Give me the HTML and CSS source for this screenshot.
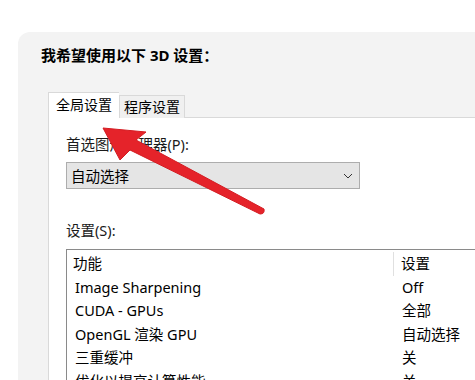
FILE: index.html
```html
<!DOCTYPE html>
<html lang="zh-CN">
<head>
    <meta charset="UTF-8">
    <title>3D 设置</title>
    <link rel="stylesheet" href="styles.css">
</head>
<body>
    <div class="panel">
        <div class="title">我希望使用以下 3D 设置：</div>
        <div class="tabs">
            <div class="tab active">全局设置</div>
            <div class="tab">程序设置</div>
        </div>
        <div class="pane">
            <div class="label">首选图形处理器(P):</div>
            <div class="select">
                <span>自动选择</span>
                <svg class="chevron" width="10" height="6" viewBox="0 0 10 6">
                    <path d="M1 1 L5 5 L9 1" fill="none" stroke="#333" stroke-width="1"/>
                </svg>
            </div>
            <div class="label label-s">设置(S):</div>
            <div class="list">
                <div class="row head">
                    <div class="c1">功能</div>
                    <div class="c2">设置</div>
                </div>
                <div class="row"><div class="c1">Image Sharpening</div><div class="c2">Off</div></div>
                <div class="row"><div class="c1">CUDA - GPUs</div><div class="c2">全部</div></div>
                <div class="row"><div class="c1">OpenGL 渲染 GPU</div><div class="c2">自动选择</div></div>
                <div class="row"><div class="c1">三重缓冲</div><div class="c2">关</div></div>
                <div class="row"><div class="c1">优化以提高计算性能</div><div class="c2">关</div></div>
            </div>
        </div>
    </div>

    <!-- 红色箭头标注 -->
    <svg class="arrow" width="475" height="380" viewBox="0 0 475 380">
        <path d="M103 128 L146 132 L136 140 L264 209 Q265 214 260 214 L130 150 L120 160 Z" fill="#e5232a" stroke="#d41c22" stroke-width="1" stroke-linejoin="round"/>
    </svg>
</body>
</html>
```

FILE: styles.css
```css
body {
    margin: 0;
    background: #fff;
    font-family: "Noto Sans", "Noto Sans CJK SC", sans-serif;
    color: #000;
    width: 475px;
    height: 380px;
    overflow: hidden;
    position: relative;
}
.panel {
    margin: 32px 0 0 18px;
    height: 348px;
    background: #f3f3f3;
    border-radius: 12px 0 0 0;
    padding: 13px 0 0 23px;
    box-sizing: border-box;
}
.title {
    font-size: 15px;
    font-weight: bold;
    line-height: 20px;
}
.tabs {
    display: flex;
    align-items: flex-end;
    margin: 27px 0 0 7px;
    height: 26px;
}
.tab {
    font-size: 14px;
    line-height: 20px;
    padding: 1px 4px 0 4px;
    height: 21px;
    background: #f0f0f0;
    border: 1px solid #d9d9d9;
    border-bottom: none;
}
.tab.active {
    background: #fff;
    padding: 2px 7px 0 7px;
    box-sizing: border-box;
    height: 26px;
    border-right: none;
    position: relative;
    z-index: 1;
}
.pane {
    margin: -1px 0 0 7px;
    background: #fff;
    border-top: 1px solid #d9d9d9;
    border-left: 1px solid #d9d9d9;
    height: 270px;
    padding: 16px 0 0 17px;
    box-sizing: border-box;
}
.label {
    font-size: 14.5px;
    line-height: 20px;
    color: #1a1a1a;
}
.select {
    display: flex;
    align-items: center;
    justify-content: space-between;
    width: 294px;
    height: 27px;
    margin-top: 8px;
    box-sizing: border-box;
    background: #e5e5e5;
    border: 1px solid #adadad;
    padding: 0 6px 0 4px;
    font-size: 14.5px;
}
.label-s {
    margin-top: 31px;
}
.list {
    margin-top: 9px;
    border-top: 1px solid #8a8a8a;
    border-left: 1px solid #8a8a8a;
    padding-top: 2px;
    height: 140px;
}
.row {
    display: flex;
    font-size: 14.5px;
    line-height: 23.5px;
}
.row .c1 {
    width: 320px;
    padding-left: 8px;
}
.row.head .c1 {
    padding-left: 6px;
}
.row .c2 {
    padding-left: 7px;
}
.row.head .c2 {
    border-left: 1px solid #e0e0e0;
    padding-left: 7px;
}
.arrow {
    position: absolute;
    left: 0;
    top: 0;
}
```
